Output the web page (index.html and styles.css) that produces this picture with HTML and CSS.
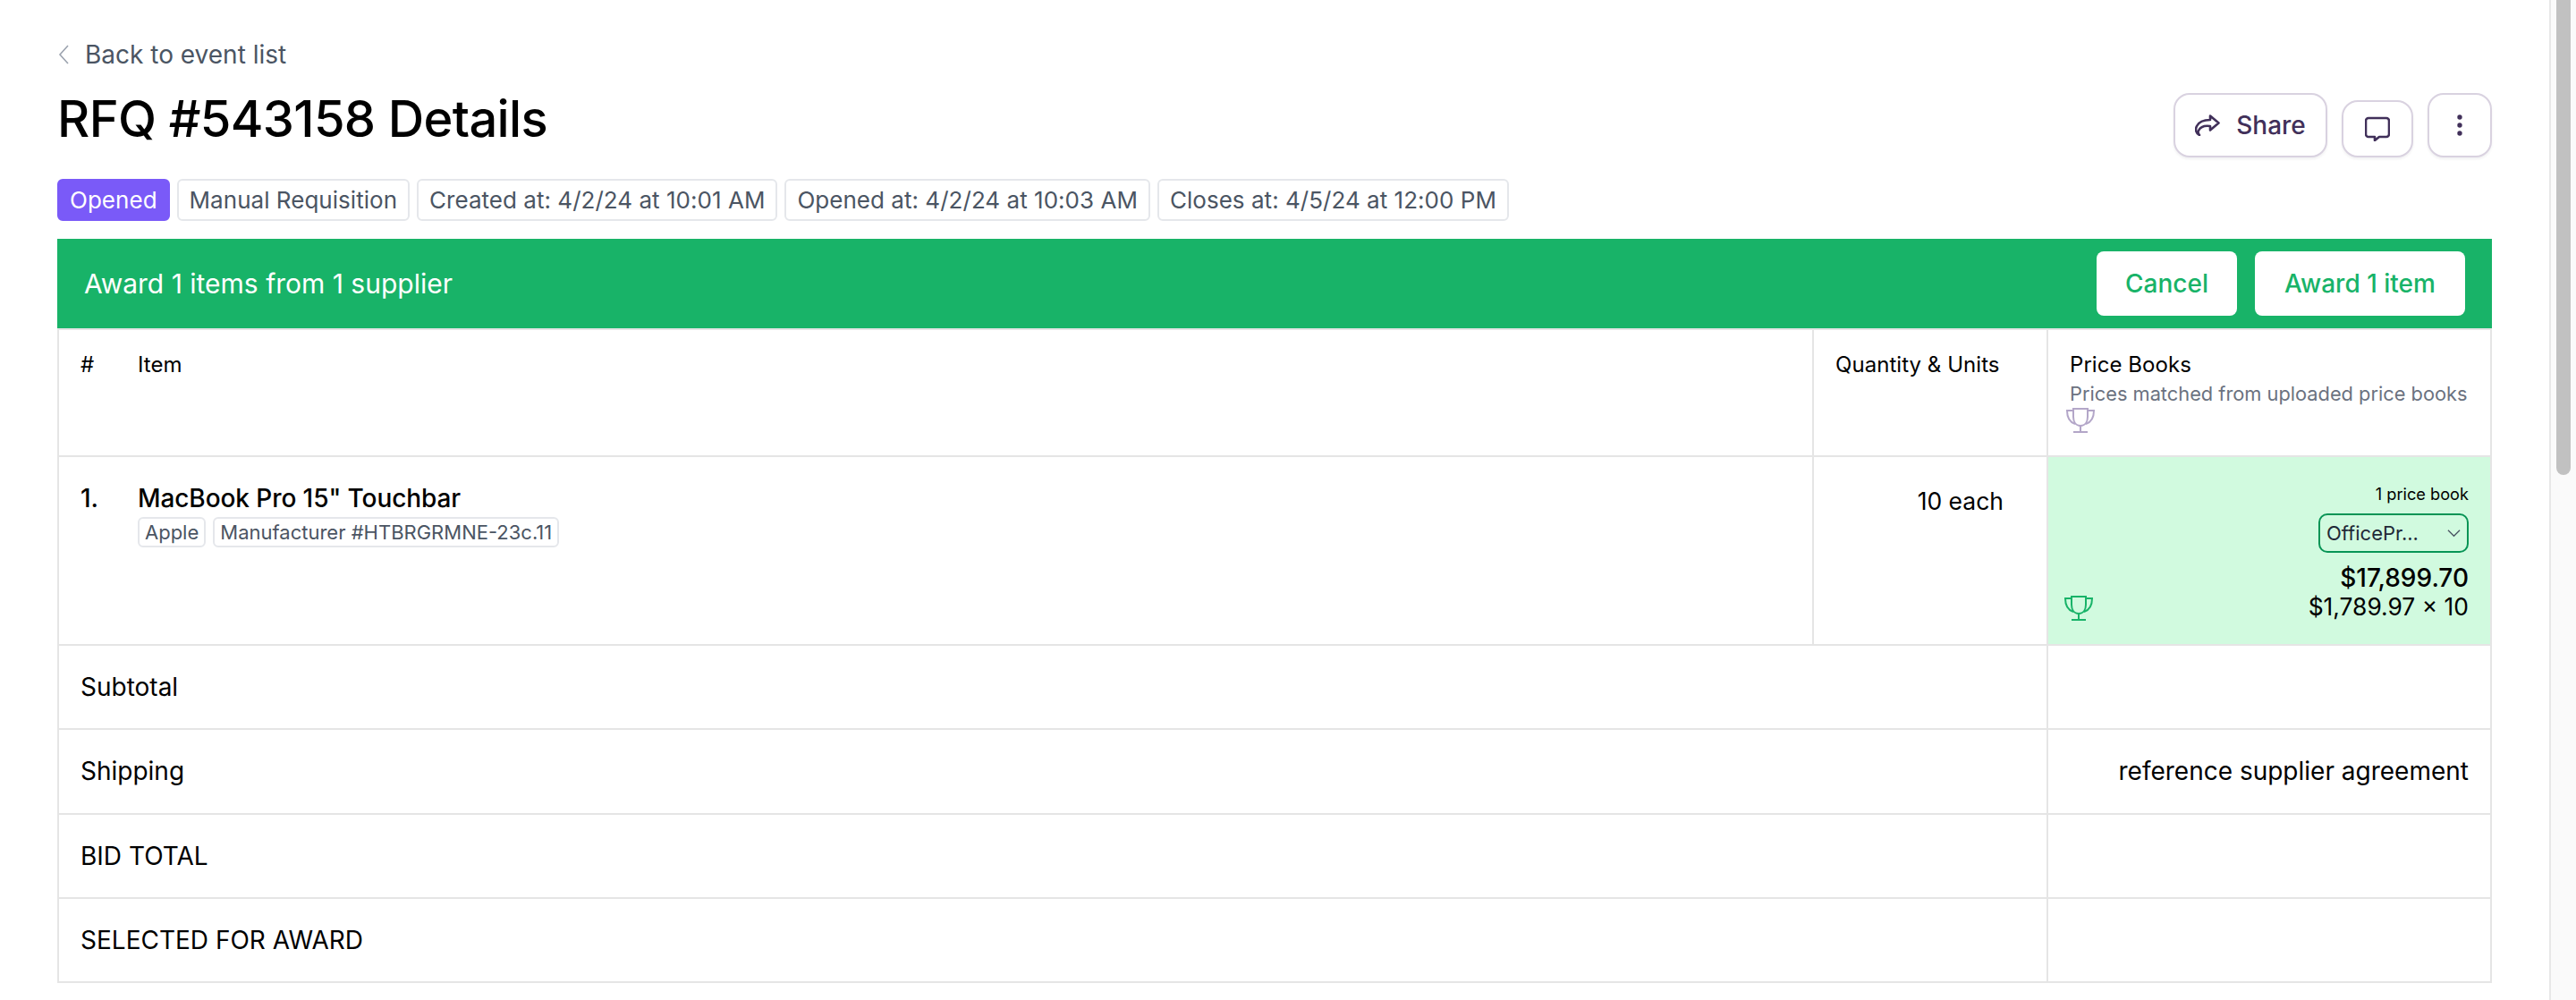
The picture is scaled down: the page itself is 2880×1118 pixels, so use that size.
FILE: index.html
```html
<!DOCTYPE html>
<html lang="en">
<head>
<meta charset="utf-8">
<title>RFQ #543158 Details</title>
<link rel="stylesheet" href="styles.css">
</head>
<body>
<div class="frame">
  <main class="page">
    <a class="back">
      <svg class="back-icon" viewBox="0 0 14 28" fill="none" stroke="#9ca3af" stroke-width="1.6"><path d="M12 4 3 14l9 10"/></svg>
      <span>Back to event list</span>
    </a>
    <header class="title-row">
      <h1 class="title">RFQ #543158 Details</h1>
      <div class="actions">
        <button class="btn btn-share">
          <svg class="icon-share" viewBox="0 0 28 24" fill="none" stroke="#41305a" stroke-width="2.6" stroke-linejoin="round" stroke-linecap="round"><path d="M17 1.5 26.5 9.5 17 17.5V13C10 12 6 14 4 18 3 20 4 22 5 23 1 21 0 17 2 13 4.5 8 10 6 17 6Z"/></svg>
          <span>Share</span>
        </button>
        <button class="btn btn-square btn-comment">
          <svg class="icon" viewBox="0 0 28 28" fill="none" stroke="#41305a" stroke-width="2.6" stroke-linejoin="round"><path d="M4 2H24a3 3 0 0 1 3 3V20a3 3 0 0 1-3 3H16L11 27V23H4a3 3 0 0 1-3-3V5a3 3 0 0 1 3-3z"/></svg>
        </button>
        <button class="btn btn-square btn-more">
          <svg class="icon" viewBox="0 0 28 28" fill="#41305a"><circle cx="14" cy="5" r="2.7"/><circle cx="14" cy="14" r="2.7"/><circle cx="14" cy="23" r="2.7"/></svg>
        </button>
      </div>
    </header>
    <div class="chips">
      <span class="chip chip-status">Opened</span>
      <span class="chip">Manual Requisition</span>
      <span class="chip">Created at: 4/2/24 at 10:01 AM</span>
      <span class="chip">Opened at: 4/2/24 at 10:03 AM</span>
      <span class="chip">Closes at: 4/5/24 at 12:00 PM</span>
    </div>
    <section class="award-bar">
      <span>Award 1 items from 1 supplier</span>
      <div class="award-actions">
        <button class="award-btn btn-cancel">Cancel</button>
        <button class="award-btn btn-award">Award 1 item</button>
      </div>
    </section>
    <table class="grid">
      <colgroup>
        <col class="col-num"><col class="col-item"><col class="col-qty"><col class="col-price">
      </colgroup>
      <thead>
        <tr class="row-head">
          <th class="no-right">#</th>
          <th>Item</th>
          <th>Quantity &amp; Units</th>
          <th class="head-price">
            <div>Price Books</div>
            <div class="sub">Prices matched from uploaded price books</div>
            <svg class="trophy trophy-muted" viewBox="0 0 32 28" fill="none" stroke="currentColor" stroke-width="2"><path d="M8 1h16v9c0 6-3 10-8 10s-8-4-8-10z"/><path d="M8 3H1c0 8 3 13 9 15M24 3h7c0 8-3 13-9 15M16 20v7M8 27h16"/></svg>
          </th>
        </tr>
      </thead>
      <tbody>
        <tr class="row-item">
          <td class="num no-right">1.</td>
          <td>
            <div class="item-name">MacBook Pro 15" Touchbar</div>
            <div class="item-tags">
              <span class="chip chip-small">Apple</span>
              <span class="chip chip-small">Manufacturer #HTBRGRMNE-23c.11</span>
            </div>
          </td>
          <td class="qty">10 each</td>
          <td class="price-cell">
            <div class="price-stack">
              <div class="price-count">1 price book</div>
              <div class="select">
                <span>OfficePr...</span>
                <svg class="chev" viewBox="0 0 16 10" fill="none" stroke="#4b5563" stroke-width="1.4"><path d="M1 1.5 8 8.5l7-7"/></svg>
              </div>
              <div class="price-total">$17,899.70</div>
              <div class="price-unit">$1,789.97 × 10</div>
              <svg class="trophy trophy-green" viewBox="0 0 32 28" fill="none" stroke="currentColor" stroke-width="2"><path d="M8 1h16v9c0 6-3 10-8 10s-8-4-8-10z"/><path d="M8 3H1c0 8 3 13 9 15M24 3h7c0 8-3 13-9 15M16 20v7M8 27h16"/></svg>
            </div>
          </td>
        </tr>
        <tr class="row-sum"><td colspan="3">Subtotal</td><td></td></tr>
        <tr class="row-sum"><td colspan="3">Shipping</td><td class="right">reference supplier agreement</td></tr>
        <tr class="row-sum"><td colspan="3">BID TOTAL</td><td></td></tr>
        <tr class="row-sum"><td colspan="3">SELECTED FOR AWARD</td><td></td></tr>
      </tbody>
    </table>
  </main>
  <aside class="scrollbar"><div class="scroll-thumb"></div></aside>
</div>
</body>
</html>
```
FILE: styles.css
```css
* { box-sizing: border-box; }
html, body { margin: 0; height: 100%; }
body { background: #fff; font-family: Inter, "Liberation Sans", sans-serif; color: #000; overflow: hidden; }
.frame { display: flex; height: 1118px; }
.page { flex: 1; min-width: 0; padding: 43px 64px 0; }
.scrollbar { width: 30px; background: #fafafa; border-left: 2px solid #e8e8e8; padding: 0 6px 0 6px; }
.scroll-thumb { width: 16px; height: 531px; background: #c1c1c1; border-radius: 0 0 8px 8px; }

.back { display: flex; align-items: center; gap: 17px; height: 36px; font-size: 28px; color: #4b5563; }
.back-icon { width: 14px; height: 28px; }

.title-row { display: flex; justify-content: space-between; align-items: flex-start; margin-top: 25px; height: 96px; }
.title { margin: 0; font-size: 56px; line-height: 58px; font-weight: 500; letter-spacing: -0.65px; }
.actions { display: flex; align-items: flex-end; gap: 16px; height: 72px; }
.btn { display: flex; align-items: center; justify-content: center; gap: 18px; background: #fff; border: 2px solid #d9d2e0; border-radius: 18px; box-shadow: 0 2px 3px rgba(16,24,40,.06); color: #41305a; font: 500 28px Inter, sans-serif; padding: 0; }
.btn-share { width: 172px; height: 72px; }
.btn-comment { width: 80px; height: 64px; }
.btn-more { width: 72px; height: 72px; }
.icon { width: 28px; height: 28px; }
.icon-share { width: 28px; height: 24px; }

.chips { display: flex; gap: 8px; }
.chip { display: inline-flex; align-items: center; height: 47px; padding: 0 12px; border: 2px solid #e5e7eb; border-radius: 6px; font-size: 26px; letter-spacing: 0.03px; color: #4b5563; white-space: nowrap; }
.chip-status { background: #7a5af8; border-color: #7a5af8; color: #fff; }
.chip-small { height: 34px; padding: 0 6px; font-size: 22px; letter-spacing: 0; }

.award-bar { display: flex; justify-content: space-between; align-items: center; height: 100px; margin-top: 20px; padding: 0 30px; background: #18b368; color: #fff; font-size: 30px; }
.award-actions { display: flex; gap: 20px; }
.award-btn { height: 72px; border: 0; border-radius: 8px; background: #fff; color: #18b368; font: 500 28px Inter, sans-serif; padding: 0; }
.btn-cancel { width: 157px; }
.btn-award { width: 235px; }

.grid { width: 100%; border-collapse: collapse; table-layout: fixed; font-size: 28px; }
.grid td, .grid th { border: 2px solid #e5e5e5; padding: 0 24px; vertical-align: top; text-align: left; }
.col-num { width: 63px; }
.col-qty { width: 262px; }
.col-price { width: 496px; }
.grid .no-right { border-right: 0; padding-right: 0; }
.grid tr > :nth-child(2) { border-left: 0; padding-left: 26px; }
.grid .row-sum > :nth-child(2) { border-left: 2px solid #e5e5e5; padding-left: 24px; }
.row-head { height: 142px; }
.row-head th { padding-top: 24px; font-size: 24px; font-weight: 430; line-height: 30px; letter-spacing: 0.05px; }
.grid .head-price { position: relative; }
.sub { margin-top: 2px; font-size: 21.8px; font-weight: 400; letter-spacing: 0; color: #6b7280; white-space: nowrap; }
.trophy { position: absolute; width: 32px; height: 28px; }
.trophy-muted { left: 20px; top: 87px; color: #b3a6c8; }

.row-item { height: 211px; }
.row-item td { padding-top: 28px; }
.num { line-height: 36px; font-weight: 450; }
.item-name { font-weight: 450; line-height: 36px; letter-spacing: -0.08px; }
.item-tags { display: flex; gap: 8px; margin-top: 3px; }
.grid .qty { text-align: right; font-size: 26.5px; line-height: 42px; padding-right: 48px; }
.price-cell { background: #d1fadf; position: relative; }
.price-stack { display: flex; flex-direction: column; align-items: flex-end; }
.trophy-green { left: 18px; bottom: 26px; color: #18b368; }
.price-count { font-size: 18.2px; line-height: 26px; }
.select { display: flex; align-items: center; justify-content: space-between; width: 168px; height: 44px; margin-top: 9px; padding: 0 7px; border: 2.5px solid #079455; border-radius: 10px; font-size: 22px; color: #1f2937; }
.chev { width: 15px; height: 10px; }
.price-total { margin-top: 10px; font-weight: 450; line-height: 36px; }
.price-unit { font-size: 26.4px; line-height: 28px; }

.row-sum { height: 94.25px; }
.row-sum td { vertical-align: middle; }
.grid .right { text-align: right; }
```
